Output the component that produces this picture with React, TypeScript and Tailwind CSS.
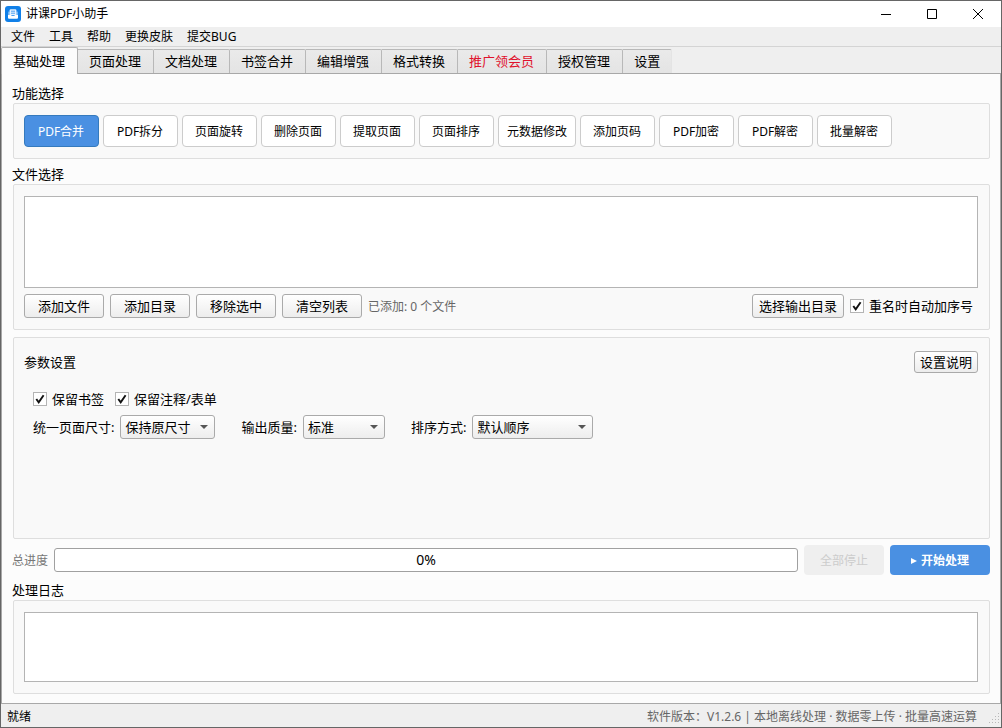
import { useState } from "react";
import type { ReactNode } from "react";

const MENUS = ["文件", "工具", "帮助", "更换皮肤", "提交BUG"];

const TABS = [
  "基础处理",
  "页面处理",
  "文档处理",
  "书签合并",
  "编辑增强",
  "格式转换",
  "推广领会员",
  "授权管理",
  "设置",
];

const FEATURES = [
  "PDF合并",
  "PDF拆分",
  "页面旋转",
  "删除页面",
  "提取页面",
  "页面排序",
  "元数据修改",
  "添加页码",
  "PDF加密",
  "PDF解密",
  "批量解密",
];

function AppIcon() {
  return (
    <svg width="16" height="16" viewBox="0 0 16 16" aria-hidden="true">
      <rect width="16" height="16" rx="3" fill="#1180e8" />
      <path d="M3 5.6h10v4H3z" fill="#6fb4f5" />
      <path d="M4.6 4.4a1.2 1.2 0 0 1 1.2-1.2h4.4a1.2 1.2 0 0 1 1.2 1.2V9H4.6z" fill="#e6f2fe" />
      <path d="M6 5.2h4M6 7.2h4" stroke="#3d97ee" strokeWidth="0.9" />
      <path
        d="M3 9h3l.8 1h2.4l.8-1h3v2.8a1 1 0 0 1-1 1H4a1 1 0 0 1-1-1z"
        fill="#ffffff"
      />
    </svg>
  );
}

function WindowButton({ label, children }: { label: string; children: ReactNode }) {
  return (
    <button
      type="button"
      aria-label={label}
      className="flex h-full w-[46px] items-center justify-center hover:bg-gray-200"
    >
      <svg
        width="12"
        height="12"
        viewBox="0 0 12 12"
        fill="none"
        stroke="#000"
        aria-hidden="true"
      >
        {children}
      </svg>
    </button>
  );
}

function Panel({ className = "", children }: { className?: string; children: ReactNode }) {
  return (
    <div
      className={`ml-px flex flex-col rounded-xs border border-[#dedede] bg-[#f9f9f9] pr-[11px] pl-[10px] ${className}`}
    >
      {children}
    </div>
  );
}

function PushButton({ className = "", children }: { className?: string; children: ReactNode }) {
  return (
    <button
      type="button"
      className={`shrink-0 rounded-[3px] border border-[#aaaaaa] bg-linear-to-b from-white to-[#ededed] text-center whitespace-nowrap ${className}`}
    >
      {children}
    </button>
  );
}

function CheckBox({ label }: { label: string }) {
  const [checked, setChecked] = useState(true);
  return (
    <label className="flex items-center gap-[5px] whitespace-nowrap">
      <span className="grid size-[14px] shrink-0">
        <input
          type="checkbox"
          checked={checked}
          onChange={(e) => setChecked(e.target.checked)}
          className="col-start-1 row-start-1 size-[14px] appearance-none border border-[#b4b4b4] bg-white"
        />
        {checked && (
          <svg
            viewBox="0 0 14 14"
            aria-hidden="true"
            className="pointer-events-none col-start-1 row-start-1 size-[14px]"
          >
            <path
              d="M3.3 7l2.4 3.4L10.6 3.2"
              fill="none"
              stroke="#111"
              strokeWidth="1.9"
            />
          </svg>
        )}
      </span>
      {label}
    </label>
  );
}

function Dropdown({
  label,
  options,
  className,
}: {
  label: string;
  options: string[];
  className: string;
}) {
  return (
    <label className="flex items-center gap-[6px] whitespace-nowrap">
      {label}
      <span className={`grid items-center ${className}`}>
        <select className="col-start-1 row-start-1 h-6 w-full appearance-none rounded-[3px] border border-[#aaaaaa] bg-linear-to-b from-white to-[#ededed] pr-5 pl-1">
          {options.map((option) => (
            <option key={option}>{option}</option>
          ))}
        </select>
        <svg
          width="8"
          height="4"
          viewBox="0 0 8 4"
          aria-hidden="true"
          className="pointer-events-none col-start-1 row-start-1 mr-[7px] justify-self-end"
        >
          <path d="M0 0h8L4 4z" fill="#555" />
        </svg>
      </span>
    </label>
  );
}

export default function App() {
  const [tab, setTab] = useState(0);
  const [feature, setFeature] = useState(0);

  return (
    <div className="flex min-h-screen flex-col border border-[#666666] bg-[#efefef] font-['Noto_Sans','Noto_Sans_CJK_SC',sans-serif] text-[13px] leading-5 text-black">
      <header className="flex h-[26px] items-center bg-white pl-1">
        <AppIcon />
        <h1 className="ml-[5px] flex-1 text-xs leading-5">讲课PDF小助手</h1>
        <WindowButton label="最小化">
          <path d="M1 6.5h10" />
        </WindowButton>
        <WindowButton label="最大化">
          <path d="M1.5 1.5h9v9h-9z" />
        </WindowButton>
        <WindowButton label="关闭">
          <path d="M1 1l10 10M11 1L1 11" />
        </WindowButton>
      </header>

      <nav className="flex h-5 items-center gap-[14px] border-b border-[#d4d4d4] px-[10px] text-xs">
        {MENUS.map((menu) => (
          <button key={menu} type="button" className="leading-5">
            {menu}
          </button>
        ))}
      </nav>

      <div className="flex h-[26px] items-end" role="tablist">
        {TABS.map((name, i) => (
          <button
            key={name}
            type="button"
            role="tab"
            aria-selected={i === tab}
            onClick={() => setTab(i)}
            className={
              i === tab
                ? "z-10 -mb-px h-[27px] rounded-t-xs border border-b-0 border-[#b0b0b0] bg-[#fcfcfc] pr-3 pb-px pl-[11px]"
                : `h-6 rounded-tr-xs border-t border-r border-[#b8b8b8] bg-linear-to-b from-[#eaeaea] to-[#e4e4e4] pr-3 pb-px pl-[11px] last:border-r-[#e4e4e4] last:pr-[11px] ${
                    i === 6 ? "text-[#e0122d]" : ""
                  }`
            }
          >
            {name}
          </button>
        ))}
      </div>

      <main className="flex flex-1 flex-col border border-[#a8a8a8] bg-[#fcfcfc] px-[10px] pt-[9px] pb-[9px]">
        <h2>功能选择</h2>
        <Panel className="py-[11px]">
          <div className="flex flex-wrap gap-1">
            {FEATURES.map((name, i) => (
              <button
                key={name}
                type="button"
                aria-pressed={i === feature}
                onClick={() => setFeature(i)}
                className={`h-8 min-w-[75px] rounded-sm border pt-px pr-[9px] pl-2 text-xs ${
                  i === feature
                    ? "border-[#357abd] bg-[#4a90e2] text-white"
                    : "border-[#cccccc] bg-white"
                } ${name.length === 5 && !name.startsWith("PDF") ? "w-[78px]" : ""}`}
              >
                <span className="whitespace-nowrap">{name}</span>
              </button>
            ))}
          </div>
        </Panel>

        <h2 className="mt-[5px]">文件选择</h2>
        <Panel className="pt-[11px] pb-[11px]">
          <textarea
            readOnly
            aria-label="文件列表"
            className="block h-[92px] w-full resize-none border border-[#b4b4b4] bg-white outline-none"
          />
          <div className="mt-[6px] flex items-center gap-[6px]">
            <PushButton className="h-6 w-20">添加文件</PushButton>
            <PushButton className="h-6 w-20">添加目录</PushButton>
            <PushButton className="h-6 w-20">移除选中</PushButton>
            <PushButton className="h-6 w-20">清空列表</PushButton>
            <span className="flex-1 pt-px text-xs leading-5 text-[#666666]">
              已添加: 0 个文件
            </span>
            <PushButton className="h-6 px-[6px]">选择输出目录</PushButton>
            <div className="pr-[5px]">
              <CheckBox label="重名时自动加序号" />
            </div>
          </div>
        </Panel>

        <Panel className="mt-[7px] min-h-[202px] flex-1 pt-[13px]">
          <div className="flex items-center justify-between">
            <h2>参数设置</h2>
            <PushButton className="h-[22px] px-[5px]">设置说明</PushButton>
          </div>
          <div className="mt-4 ml-[9px] flex gap-[11px]">
            <CheckBox label="保留书签" />
            <CheckBox label="保留注释/表单" />
          </div>
          <div className="mt-[6px] ml-[9px] flex gap-[26px]">
            <Dropdown
              label="统一页面尺寸:"
              options={["保持原尺寸", "A4", "A3"]}
              className="w-[95px]"
            />
            <Dropdown
              label="输出质量:"
              options={["标准", "高质量", "压缩"]}
              className="w-[82px]"
            />
            <Dropdown
              label="排序方式:"
              options={["默认顺序", "按文件名", "按修改时间"]}
              className="w-[121px]"
            />
          </div>
        </Panel>

        <div className="mt-[6px] flex items-center gap-[6px]">
          <span className="pt-px text-xs leading-5 text-[#777777]">总进度</span>
          <div
            role="progressbar"
            aria-label="总进度"
            aria-valuenow={0}
            aria-valuemin={0}
            aria-valuemax={100}
            className="flex h-6 flex-1 items-center justify-center rounded-[3px] border border-[#a0a0a0] bg-white text-sm"
          >
            0%
          </div>
          <button
            type="button"
            disabled
            className="h-[30px] w-20 rounded-sm bg-[#efefef] pt-px text-xs text-[#cccccc]"
          >
            全部停止
          </button>
          <button
            type="button"
            className="flex h-[30px] w-[100px] items-center justify-center gap-1 rounded-sm bg-[#4a90e2] pt-px text-xs font-bold text-white"
          >
            <svg width="6" height="6" viewBox="0 0 6 6" aria-hidden="true">
              <path d="M0 0l6 3-6 3z" fill="#fff" />
            </svg>
            开始处理
          </button>
        </div>

        <h2 className="mt-[5px]">处理日志</h2>
        <Panel className="py-[11px]">
          <textarea
            readOnly
            aria-label="处理日志"
            className="block h-[70px] w-full resize-none border border-[#b4b4b4] bg-white outline-none"
          />
        </Panel>
      </main>

      <footer className="flex h-[23px] items-center justify-between pt-[2px] pl-[6px] text-xs">
        <span>就绪</span>
        <div className="flex items-end gap-[11px]">
          <span className="text-[#666666]">
            软件版本：V1.2.6 | 本地离线处理 · 数据零上传 · 批量高速运算
          </span>
          <svg width="13" height="13" viewBox="0 0 13 13" fill="#b8b8b8" aria-hidden="true">
            <path d="M10 1h1v1h-1zM7 4h1v1H7zM10 4h1v1h-1zM4 7h1v1H4zM7 7h1v1H7zM10 7h1v1h-1zM1 10h1v1H1zM4 10h1v1H4zM7 10h1v1H7zM10 10h1v1h-1z" />
          </svg>
        </div>
      </footer>
    </div>
  );
}
